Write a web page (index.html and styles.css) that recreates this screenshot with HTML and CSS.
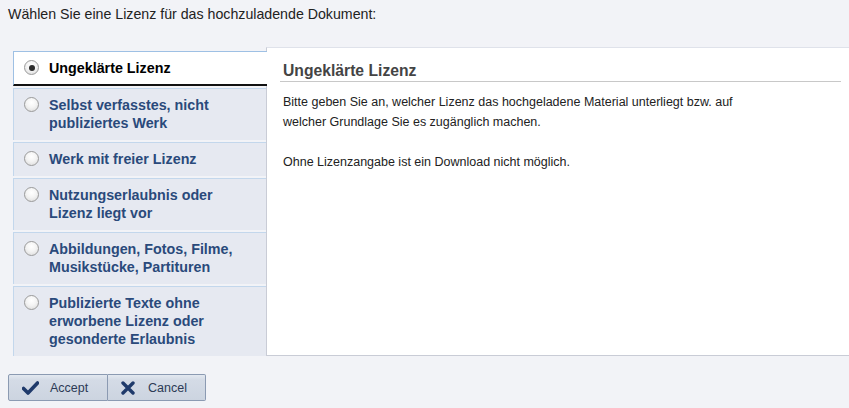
FILE: index.html
```html
<!DOCTYPE html>
<html lang="de">
<head>
<meta charset="utf-8">
<title>Lizenz wählen</title>
<link rel="stylesheet" href="styles.css">
</head>
<body>
<div class="intro">Wählen Sie eine Lizenz für das hochzuladende Dokument:</div>
<div class="chooser">
  <ul class="tabs">
    <li class="tab selected"><span class="radio checked"></span><span class="label">Ungeklärte Lizenz</span></li>
    <li class="tab"><span class="radio"></span><span class="label">Selbst verfasstes, nicht<br>publiziertes Werk</span></li>
    <li class="tab"><span class="radio"></span><span class="label">Werk mit freier Lizenz</span></li>
    <li class="tab"><span class="radio"></span><span class="label">Nutzungserlaubnis oder<br>Lizenz liegt vor</span></li>
    <li class="tab"><span class="radio"></span><span class="label">Abbildungen, Fotos, Filme,<br>Musikstücke, Partituren</span></li>
    <li class="tab"><span class="radio"></span><span class="label">Publizierte Texte ohne<br>erworbene Lizenz oder<br>gesonderte Erlaubnis</span></li>
  </ul>
  <div class="panel">
    <h2 class="panel-title">Ungeklärte Lizenz</h2>
    <p class="panel-text">Bitte geben Sie an, welcher Lizenz das hochgeladene Material unterliegt bzw. auf<br>welcher Grundlage Sie es zugänglich machen.</p>
    <p class="panel-text">Ohne Lizenzangabe ist ein Download nicht möglich.</p>
  </div>
</div>
<div class="buttons">
  <button class="btn btn-first" type="button">
    <svg class="icon" width="17" height="14" viewBox="0 0 17 14"><path d="M1.5 7.5 L6 12 L15.5 2" fill="none" stroke="#1f3a6b" stroke-width="3.6" stroke-linecap="round" stroke-linejoin="round"/></svg>
    <span>Accept</span>
  </button>
  <button class="btn" type="button">
    <svg class="icon" width="14" height="14" viewBox="0 0 14 14"><path d="M2 2 L12 12 M12 2 L2 12" fill="none" stroke="#1f3a6b" stroke-width="3.4" stroke-linecap="round"/></svg>
    <span>Cancel</span>
  </button>
</div>
</body>
</html>
```
FILE: styles.css
```css
html, body {
  margin: 0;
  padding: 0;
}
body {
  background: #f2f3f7;
  font-family: "Liberation Sans", Arial, sans-serif;
  font-size: 12.5px;
  color: #222222;
}
.intro {
  padding: 6px 8px 0 8px;
  font-size: 14.2px;
  line-height: 16px;
  height: 25px;
}
.chooser {
  display: flex;
  align-items: stretch;
  margin-top: 17px;
}
.tabs {
  list-style: none;
  margin: 0 0 0 13px;
  padding: 3px 0 0 0;
  width: 253px;
  flex: none;
  display: flex;
  flex-direction: column;
  gap: 2px;
  position: relative;
  z-index: 1;
}
.tab {
  display: flex;
  align-items: flex-start;
  background: #e6e9f1;
  border-top: 1px solid #c3d7ec;
  border-left: 1px solid #c3d7ec;
  padding: 7px 0 8px 10px;
  line-height: 18px;
  font-size: 14.3px;
  font-weight: bold;
  color: #2a4a7b;
}
.tab.selected {
  background: #ffffff;
  color: #000000;
  border-top-color: #9ec0e4;
  border-left-color: #9ec0e4;
  border-bottom: 2px solid #111111;
  padding-bottom: 7px;
  margin-right: -1px;
}
.radio {
  flex: none;
  box-sizing: border-box;
  width: 15px;
  height: 15px;
  margin-top: 1px;
  margin-right: 10px;
  border-radius: 50%;
  border: 1px solid #9a9a9a;
  background: radial-gradient(circle at 50% 35%, #ffffff 0%, #f4f4f4 45%, #d8d8d8 100%);
  position: relative;
}
.radio.checked::after {
  content: "";
  position: absolute;
  left: 3.5px;
  top: 3.5px;
  width: 6px;
  height: 6px;
  border-radius: 50%;
  background: #2b2b2b;
}
.panel {
  flex: 1;
  background: #ffffff;
  border-top: 1px solid #dfe2ea;
  border-left: 1px solid #c9ccd6;
  border-bottom: 1px solid #c9ccd6;
  padding: 0 8px 0 13px;
  margin-top: -1px;
}
.panel-title {
  margin: 13px 0 0 0;
  padding: 0 0 0 3px;
  font-size: 15.7px;
  line-height: 20px;
  font-weight: bold;
  color: #444444;
  border-bottom: 1px solid #c8c8c8;
}
.panel-text {
  margin: 10px 0 0 3px;
  line-height: 20px;
  color: #222222;
}
.panel-text + .panel-text {
  margin-top: 20px;
}
.buttons {
  display: flex;
  margin: 18px 0 0 8px;
}
.btn {
  display: flex;
  align-items: center;
  box-sizing: border-box;
  width: 100px;
  height: 27px;
  padding: 0 0 0 13px;
  border: 1px solid #8b9ab2;
  background: linear-gradient(#e3e8f0 0%, #d4dbe6 20%, #ccd4e0 100%);
  font-family: "Liberation Sans", Arial, sans-serif;
  font-size: 12.5px;
  color: #2c3a55;
  border-radius: 2px 0 0 2px;
}
.btn + .btn {
  border-left: none;
  width: 98px;
  border-radius: 0 2px 2px 0;
}
.btn .icon {
  flex: none;
  margin-right: 11px;
}
.btn + .btn .icon {
  margin-right: 13px;
}
```
